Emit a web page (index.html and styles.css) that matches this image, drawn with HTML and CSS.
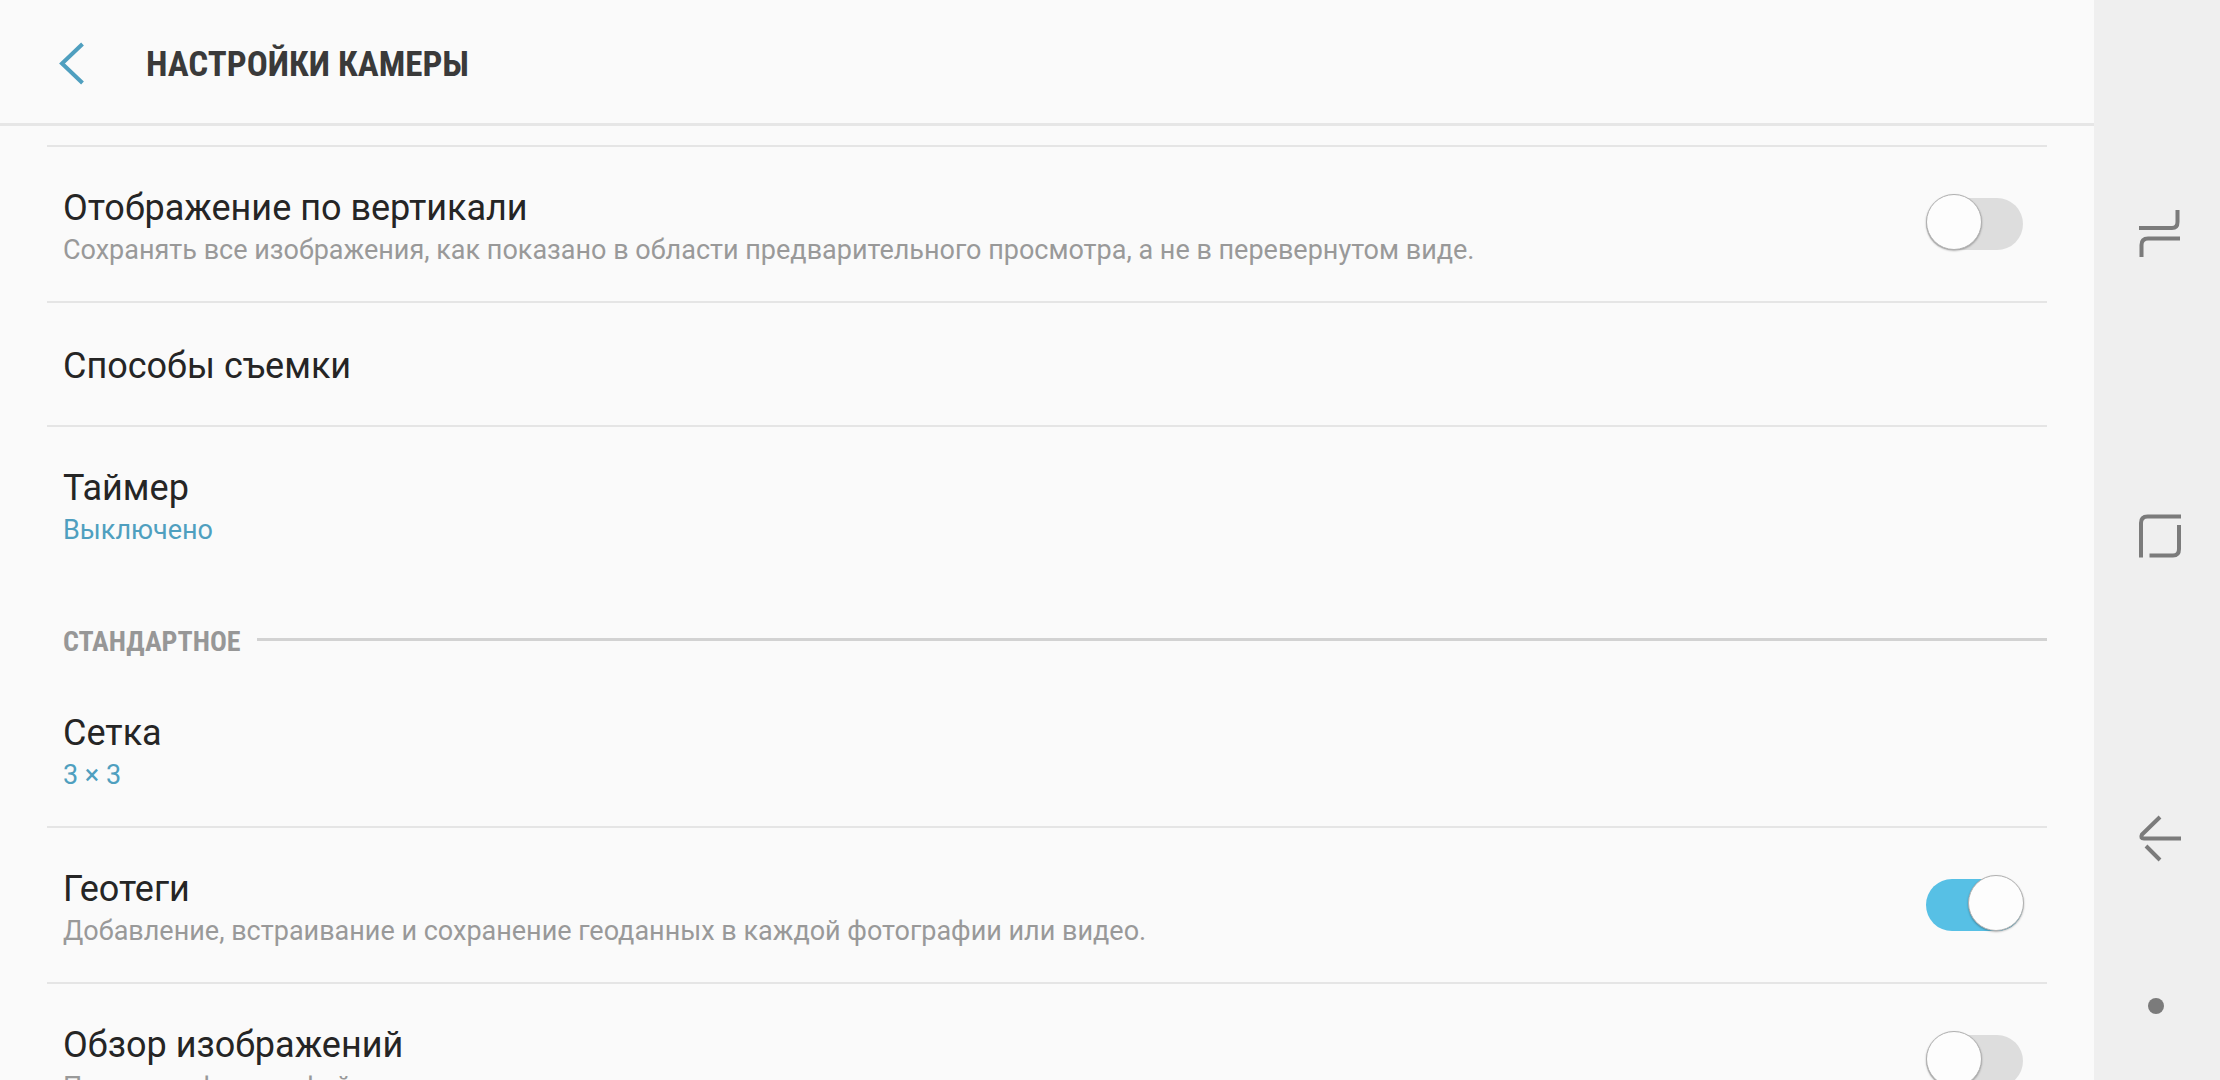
FILE: index.html
```html
<!DOCTYPE html>
<html lang="ru">
<head>
<meta charset="utf-8">
<meta name="viewport" content="width=device-width, initial-scale=1">
<title>Настройки камеры</title>
<link rel="stylesheet" href="styles.css">
</head>
<body>
<div class="screen">
  <main class="settings">
    <header class="app-bar">
      <button class="back" type="button" aria-label="Назад">
        <svg width="28" height="44" viewBox="0 0 28 44" fill="none" stroke="#4f9fbf" stroke-width="4"><path d="M24.500 2 4 21.500 24.500 41"/></svg>
      </button>
      <h1 class="app-title">НАСТРОЙКИ КАМЕРЫ</h1>
    </header>
    <div class="list">
      <div class="row divided">
        <label class="texts" for="vertical">
          <span class="name">Отображение по вертикали</span>
          <span class="note">Сохранять все изображения, как показано в области предварительного просмотра, а не в перевернутом виде.</span>
        </label>
        <input class="switch" id="vertical" type="checkbox" role="switch">
      </div>
      <button class="row divided single" type="button">
        <span class="name">Способы съемки</span>
      </button>
      <button class="row divided" type="button">
        <span class="texts">
          <span class="name">Таймер</span>
          <span class="note value">Выключено</span>
        </span>
      </button>
      <h2 class="section">СТАНДАРТНОЕ</h2>
      <button class="row" type="button">
        <span class="texts">
          <span class="name">Сетка</span>
          <span class="note value">3 × 3</span>
        </span>
      </button>
      <div class="row divided">
        <label class="texts" for="geotags">
          <span class="name">Геотеги</span>
          <span class="note">Добавление, встраивание и сохранение геоданных в каждой фотографии или видео.</span>
        </label>
        <input class="switch" id="geotags" type="checkbox" role="switch" checked>
      </div>
      <div class="row divided">
        <label class="texts" for="review">
          <span class="name">Обзор изображений</span>
          <span class="note">Просмотр фотографий</span>
        </label>
        <input class="switch" id="review" type="checkbox" role="switch">
      </div>
    </div>
  </main>
  <nav class="nav-bar">
    <button class="nav-key" type="button" aria-label="Последние приложения">
      <svg width="42" height="48" viewBox="0 0 42 48" fill="none" stroke="#7b7b7b" stroke-width="4"><path d="M0 18H33Q38.500 18 38.500 12V0M41 28.500H9Q2.500 28.500 2.500 35V47"/></svg>
    </button>
    <button class="nav-key" type="button" aria-label="Главный экран">
      <svg width="42" height="44" viewBox="0 0 42 44" fill="none" stroke="#7b7b7b" stroke-width="4"><path d="M2 43.500V9Q2 2.500 8.500 2.500H42M40 11V35Q40 41.500 34 41.500H10.500"/></svg>
    </button>
    <button class="nav-key" type="button" aria-label="Назад">
      <svg width="42" height="46" viewBox="0 0 42 46" fill="none" stroke="#7b7b7b" stroke-width="4"><path d="M21 2 3 19.500Q1 23.500 5 23.500H42M7 31 21 45"/></svg>
    </button>
    <button class="nav-dot" type="button" aria-label="Скрыть панель">
      <svg width="16" height="16" viewBox="0 0 16 16"><circle cx="8" cy="8" r="8" fill="#7b7b7b"/></svg>
    </button>
  </nav>
</div>
</body>
</html>
```
FILE: styles.css
```css
*,
*::before,
*::after {
  box-sizing: border-box;
}

body {
  margin: 0;
  background: #fafafa;
  color: #252525;
  font-family: Roboto, "Noto Sans", sans-serif;
}

button {
  margin: 0;
  padding: 0;
  border: 0;
  background: none;
  color: inherit;
  font: inherit;
  text-align: left;
}

svg {
  display: block;
  overflow: visible;
}

.screen {
  display: flex;
  height: 100vh;
  overflow: hidden;
}

.settings {
  flex: 1;
  min-width: 0;
}

.app-bar {
  display: flex;
  align-items: center;
  gap: 60px;
  padding: 42px 58px 37px;
  border-bottom: 3px solid #e6e6e6;
}

.app-title {
  margin: 0;
  padding-top: 2px;
  color: #3a3a3a;
  font-family: "Roboto Condensed", "Liberation Sans Narrow", Roboto, sans-serif;
  font-size: 35px;
  line-height: 42px;
  font-weight: 700;
}

.list {
  padding: 19px 47px 0;
}

.row {
  display: flex;
  align-items: center;
  justify-content: space-between;
  width: 100%;
  padding: 37px 24px 33px 16px;
}

.single {
  padding-top: 39px;
  padding-bottom: 35px;
}

.divided {
  border-top: 2px solid #e5e5e5;
}

.texts {
  display: flex;
  flex-direction: column;
}

.name {
  font-size: 36px;
  line-height: 48px;
}

.note {
  color: #999;
  font-size: 27px;
  line-height: 36px;
}

.value {
  color: #4f9fbf;
}

.section {
  display: flex;
  align-items: center;
  gap: 16px;
  margin: 0;
  padding: 43px 0 12px 16px;
  color: #979797;
  font-family: "Roboto Condensed", "Liberation Sans Narrow", Roboto, sans-serif;
  font-size: 28px;
  line-height: 36px;
  font-weight: 700;
}

.section::after {
  content: "";
  flex: 1;
  height: 3px;
  margin-bottom: 5px;
  background: #d2d2d2;
}

.switch {
  appearance: none;
  position: relative;
  flex: none;
  width: 97px;
  height: 52px;
  margin: 0 0 4px;
  border-radius: 26px;
  background: #ddd;
}

.switch::before {
  content: "";
  position: absolute;
  top: -4px;
  left: 0;
  width: 56px;
  height: 56px;
  border: 1px solid #b0b0b0;
  border-radius: 50%;
  background: #fdfdfd;
  box-shadow: 0 1px 2px rgba(0, 0, 0, 0.3);
}

.switch:checked {
  background: #57c0e5;
}

.switch:checked::before {
  left: auto;
  right: -1px;
}

.nav-bar {
  display: flex;
  flex: none;
  flex-direction: column;
  width: 126px;
  padding: 83px 0 57px;
  background: #efefef;
}

.nav-key {
  display: flex;
  flex: 1;
  align-items: center;
  justify-content: center;
  padding-left: 5px;
}

.nav-dot {
  display: flex;
  align-items: center;
  justify-content: center;
  height: 34px;
  padding-right: 2px;
}
```
